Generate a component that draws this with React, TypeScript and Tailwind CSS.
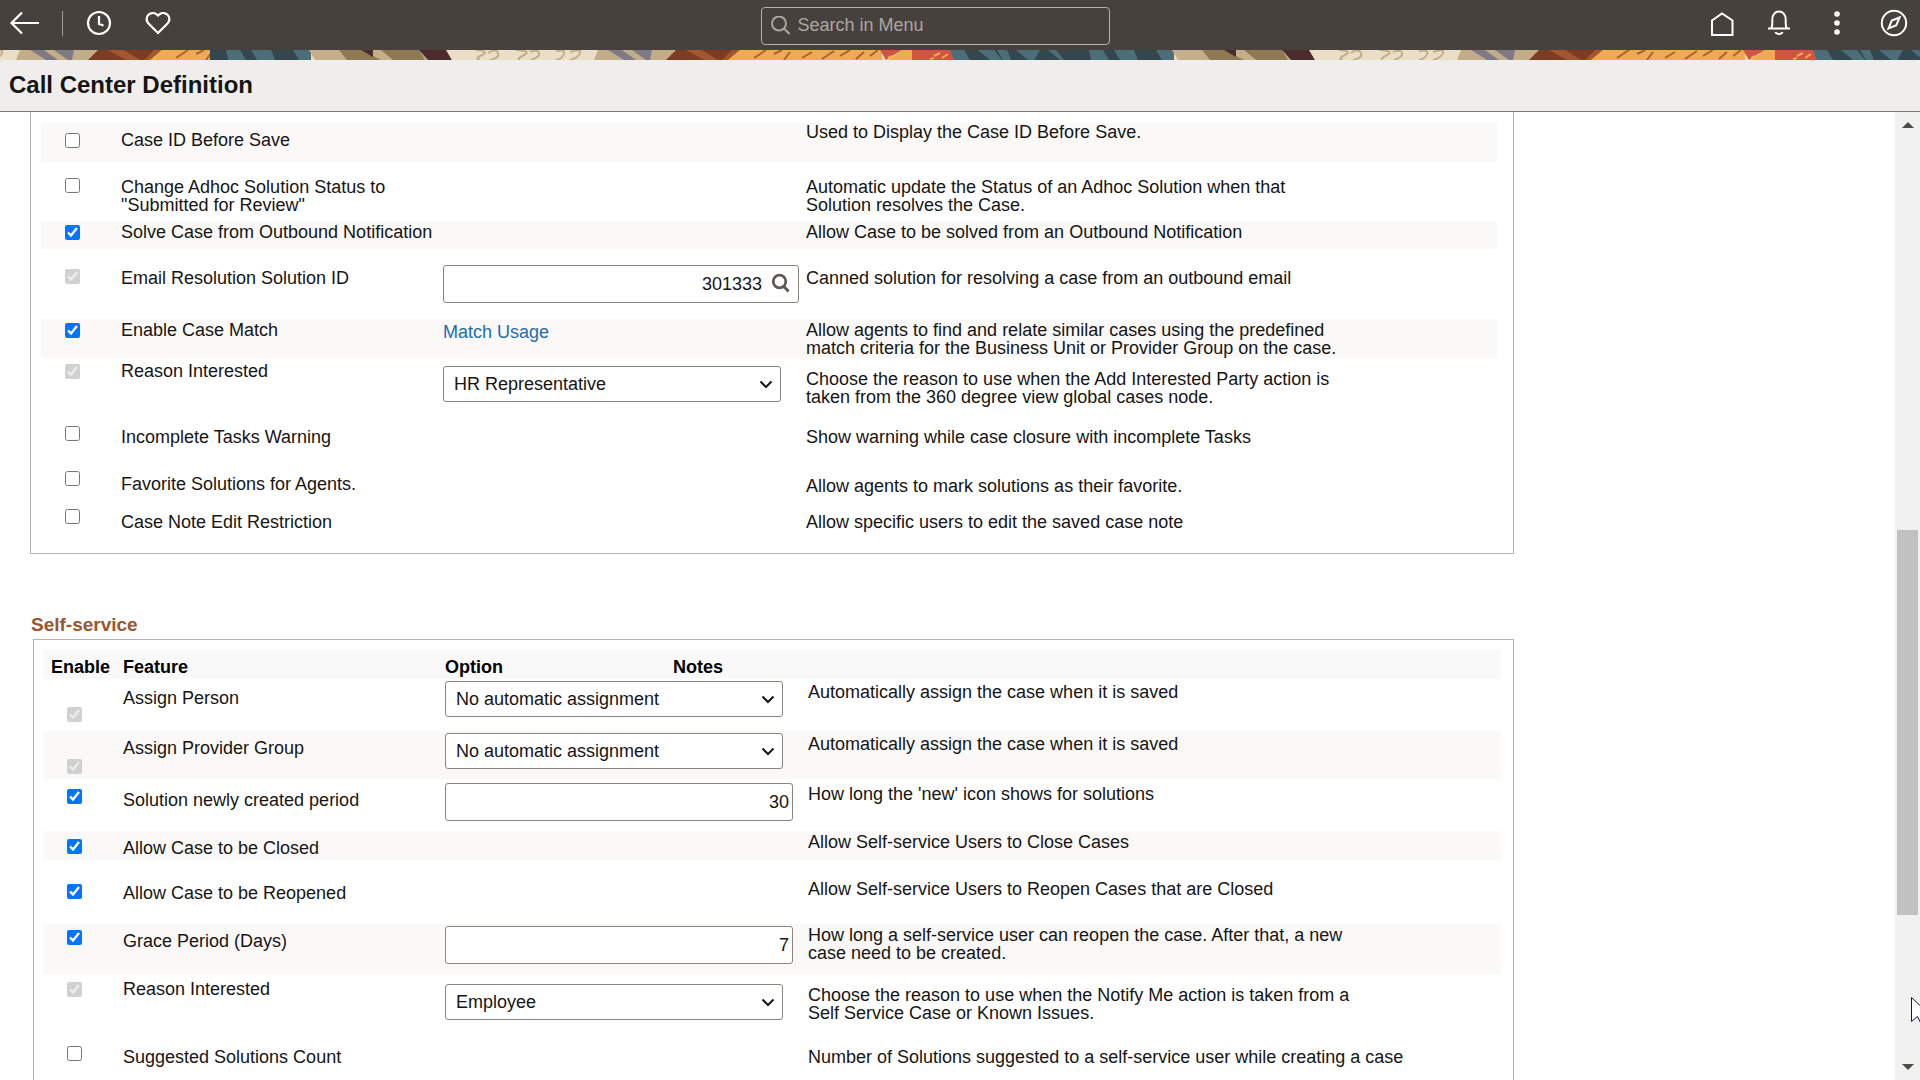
import { useState } from 'react'

type Control =
  | { kind: 'select'; value: string }
  | { kind: 'number'; value: string }
  | { kind: 'lookup'; value: string }
  | { kind: 'link'; value: string }

interface Feature {
  id: string
  label: string
  note: string
  checked?: boolean
  disabled?: boolean
  control?: Control
  row: string
  boxPad: string
  labelPad: string
  controlPad?: string
  notePad: string
}

const CASE_FEATURES: Feature[] = [
  {
    id: 'case-id', label: 'Case ID Before Save', note: 'Used to Display the Case ID Before Save.',
    row: 'h-[39px] bg-[#faf9f8]', boxPad: 'pt-2.5', labelPad: 'pt-2', notePad: 'pt-0',
  },
  {
    id: 'adhoc', label: 'Change Adhoc Solution Status to\n"Submitted for Review"',
    note: 'Automatic update the Status of an Adhoc Solution when that\nSolution resolves the Case.',
    row: 'h-[59px]', boxPad: 'pt-4', labelPad: 'pt-4', notePad: 'pt-4',
  },
  {
    id: 'solve', label: 'Solve Case from Outbound Notification', note: 'Allow Case to be solved from an Outbound Notification',
    checked: true, row: 'h-[28px] bg-[#faf9f8]', boxPad: 'pt-1', labelPad: 'pt-0.5', notePad: 'pt-0.5',
  },
  {
    id: 'email', label: 'Email Resolution Solution ID', note: 'Canned solution for resolving a case from an outbound email',
    checked: true, disabled: true, control: { kind: 'lookup', value: '301333' },
    row: 'h-[70px]', boxPad: 'pt-5', labelPad: 'pt-5', controlPad: 'pt-4', notePad: 'pt-5',
  },
  {
    id: 'match', label: 'Enable Case Match',
    note: 'Allow agents to find and relate similar cases using the predefined\nmatch criteria for the Business Unit or Provider Group on the case.',
    checked: true, control: { kind: 'link', value: 'Match Usage' },
    row: 'h-[39px] bg-[#faf9f8]', boxPad: 'pt-1', labelPad: 'pt-0.5', controlPad: 'pt-1', notePad: 'pt-0.5',
  },
  {
    id: 'reason', label: 'Reason Interested',
    note: 'Choose the reason to use when the Add Interested Party action is\ntaken from the 360 degree view global cases node.',
    checked: true, disabled: true, control: { kind: 'select', value: 'HR Representative' },
    row: 'h-[62px]', boxPad: 'pt-1.5', labelPad: 'pt-1', controlPad: 'pt-2', notePad: 'pt-3',
  },
  {
    id: 'incomplete', label: 'Incomplete Tasks Warning', note: 'Show warning while case closure with incomplete Tasks',
    row: 'h-[45px]', boxPad: 'pt-1.5', labelPad: 'pt-2', notePad: 'pt-2',
  },
  {
    id: 'favorite', label: 'Favorite Solutions for Agents.', note: 'Allow agents to mark solutions as their favorite.',
    row: 'h-[40px]', boxPad: 'pt-1.5', labelPad: 'pt-2.5', notePad: 'pt-3',
  },
  {
    id: 'note-edit', label: 'Case Note Edit Restriction', note: 'Allow specific users to edit the saved case note',
    row: 'h-[36px]', boxPad: 'pt-1', labelPad: 'pt-2', notePad: 'pt-2',
  },
]

const SELF_SERVICE_FEATURES: Feature[] = [
  {
    id: 'assign-person', label: 'Assign Person', note: 'Automatically assign the case when it is saved',
    checked: true, disabled: true, control: { kind: 'select', value: 'No automatic assignment' },
    row: 'h-[52px]', boxPad: 'pt-7', labelPad: 'pt-2.5', controlPad: 'pt-0.5', notePad: 'pt-1',
  },
  {
    id: 'assign-group', label: 'Assign Provider Group', note: 'Automatically assign the case when it is saved',
    checked: true, disabled: true, control: { kind: 'select', value: 'No automatic assignment' },
    row: 'h-[48px] bg-[#faf9f8]', boxPad: 'pt-7', labelPad: 'pt-2', controlPad: 'pt-0.5', notePad: 'pt-1',
  },
  {
    id: 'new-period', label: 'Solution newly created period', note: "How long the 'new' icon shows for solutions",
    checked: true, control: { kind: 'number', value: '30' },
    row: 'h-[52px]', boxPad: 'pt-2.5', labelPad: 'pt-3', controlPad: 'pt-1', notePad: 'pt-1.5',
  },
  {
    id: 'closed', label: 'Allow Case to be Closed', note: 'Allow Self-service Users to Close Cases',
    checked: true, row: 'h-[29px] bg-[#faf9f8]', boxPad: 'pt-2', labelPad: 'pt-2', notePad: 'pt-0.5',
  },
  {
    id: 'reopened', label: 'Allow Case to be Reopened', note: 'Allow Self-service Users to Reopen Cases that are Closed',
    checked: true, row: 'h-[64px]', boxPad: 'pt-6', labelPad: 'pt-6', notePad: 'pt-5',
  },
  {
    id: 'grace', label: 'Grace Period (Days)',
    note: 'How long a self-service user can reopen the case. After that, a new\ncase need to be created.',
    checked: true, control: { kind: 'number', value: '7' },
    row: 'h-[50px] bg-[#faf9f8]', boxPad: 'pt-1.5', labelPad: 'pt-2', controlPad: 'pt-0.5', notePad: 'pt-0.5',
  },
  {
    id: 'ss-reason', label: 'Reason Interested',
    note: 'Choose the reason to use when the Notify Me action is taken from a\nSelf Service Case or Known Issues.',
    checked: true, disabled: true, control: { kind: 'select', value: 'Employee' },
    row: 'h-[62px]', boxPad: 'pt-2', labelPad: 'pt-1.5', controlPad: 'pt-2.5', notePad: 'pt-3',
  },
  {
    id: 'suggested', label: 'Suggested Solutions Count', note: 'Number of Solutions suggested to a self-service user while creating a case',
    row: 'h-[64px]', boxPad: 'pt-2.5', labelPad: 'pt-3', notePad: 'pt-3',
  },
]

function OptionControl({ control, label }: { control: Control; label: string }) {
  if (control.kind === 'link') {
    return <a href="#match-usage" className="block text-[#1f6cab]">{control.value}</a>
  }
  if (control.kind === 'select') {
    return (
      <div className="relative w-[338px]">
        <select
          aria-label={label}
          defaultValue={control.value}
          className="block h-9 w-full appearance-none rounded-[3px] border border-[#8b8580] bg-white pl-2.5 pr-8 leading-6"
        >
          <option>{control.value}</option>
        </select>
        <svg className="pointer-events-none absolute right-2 top-3 h-3 w-3.5" viewBox="0 0 14 12" fill="none" stroke="#161513" strokeWidth="2">
          <path d="M1.5 3.5 7 9l5.5-5.5" />
        </svg>
      </div>
    )
  }
  if (control.kind === 'lookup') {
    return (
      <div className="relative w-[356px]">
        <input
          aria-label={label}
          defaultValue={control.value}
          className="block h-[38px] w-full rounded-[3px] border border-[#8b8580] bg-white pr-9 text-right"
        />
        <button aria-label="Look up solution" className="absolute right-2 top-2">
          <svg className="size-5" viewBox="0 0 20 20" fill="none" stroke="#5f5a56" strokeWidth="2.8">
            <circle cx="8.5" cy="8.5" r="6.3" />
            <path d="m13 13.5 4.500 5" />
          </svg>
        </button>
      </div>
    )
  }
  return (
    <input
      aria-label={label}
      defaultValue={control.value}
      className="block h-[38px] w-[348px] rounded-[3px] border border-[#8b8580] bg-white pr-[3px] text-right"
    />
  )
}

function FeatureTable({ features, withHeader }: { features: Feature[]; withHeader?: boolean }) {
  const [enabled, setEnabled] = useState<Record<string, boolean>>(
    Object.fromEntries(features.map((f) => [f.id, !!f.checked])),
  )

  return (
    <table className="w-full table-fixed border-collapse text-left">
      <colgroup>
        <col className="w-[80px]" />
        <col className="w-[322px]" />
        <col className="w-[228px]" />
        <col className="w-[135px]" />
        <col />
      </colgroup>
      {withHeader && (
        <thead>
          <tr className="h-[29px] bg-[#f9f9f9] align-top text-black">
            <th className="pl-2 pt-2">Enable</th>
            <th className="pt-2">Feature</th>
            <th className="pt-2">Option</th>
            <th className="pt-2" colSpan={2}>Notes</th>
          </tr>
        </thead>
      )}
      <tbody>
        {features.map((f) => (
          <tr key={f.id} className={`align-top ${f.row}`}>
            <td className={`pl-6 ${f.boxPad}`}>
              <input
                id={f.id}
                type="checkbox"
                className="block size-[15px]"
                checked={enabled[f.id]}
                disabled={f.disabled}
                onChange={(e) => setEnabled({ ...enabled, [f.id]: e.target.checked })}
              />
            </td>
            <td className={f.labelPad}>
              <label htmlFor={f.id} className="block whitespace-pre-line">{f.label}</label>
            </td>
            <td colSpan={2} className={f.controlPad}>
              {f.control && <OptionControl control={f.control} label={f.label} />}
            </td>
            <td className={`whitespace-pre-line ${f.notePad}`}>{f.note}</td>
          </tr>
        ))}
      </tbody>
    </table>
  )
}

// One repeat of the banner artwork, 863 x 10
function BannerTile() {
  return (
    <g>
      <rect width="147" height="10" fill="#eadfc6" />
      <g fill="none" stroke="#c3ac88" strokeWidth="2">
        <path d="M24 0q14 1 6 5t-2 5M36 3q8-5 10 0t-8 7M64 0q16 1 8 5t-4 5M78 2q8-3 9 1t-8 7M104 1q10-2 8 3t-8 6M118 2q12-4 10 1t-10 7" />
      </g>
      <path d="M146 0h78l-8 10h-74z" fill="#c3ac88" />
      <path d="M156 0h14l14 10h-12zM180 0h20l-2 10h-4z" fill="#7d7c86" />
      <path d="M224 0h64l-12 10h-62z" fill="#7d3b21" />
      <path d="M234 0h16l16 10h-14zM280 0h8l-12 10h-6z" fill="#a3562f" />
      <path d="M288 0h142v10H276z" fill="#f0ab4c" />
      <g stroke="#a8642c" strokeWidth="2" fill="none">
        <path d="m302 8 12-8M322 4l8-4M332 10l6-8M350 8l10-6M370 9l12-8M388 6l10-6M404 9l8-7M418 6l8-6" />
      </g>
      <path d="M428 0h22l-10 6-6 4zM460 0h38l4 10h-42z" fill="#d5523f" />
      <path d="M450 0h10v10h-24z" fill="#f0ab4c" />
      <path d="M482 6l6-3M478 9l4-1M490 8l6-4M436 8l4-2" stroke="#f0ab4c" strokeWidth="2" />
      <path d="M498 0h222v10H502z" fill="#34474f" />
      <path d="M498 0h14l6 10h-16zM526 0h16l8 10h-12zM545 0h10l4 10h-8zM564 0h24l-6 10h-6zM596 0h8l8 10h-4zM637 0h14l6 10h-18zM662 0h20l4 10h-18zM704 0h18v10h-12z" fill="#4a6f78" />
      <path d="M720 0h124v10H726z" fill="#c6ae8b" />
      <path d="M750 0h22l20 10h-34zM810 0h20l6 10h-32l-12-10z" fill="#8f7952" />
      <path d="M772 0h12v7z" fill="#4d2b2c" />
      <path d="M830 0h28l5 10h-24z" fill="#4d2b2c" />
      <path d="M857 0h6v10z" fill="#eadfc6" />
    </g>
  )
}

function Banner() {
  return (
    <svg className="block h-2.5 w-full shrink-0 bg-[#eadfc6]" aria-hidden="true">
      <defs>
        <clipPath id="banner-start"><rect width="210" height="10" /></clipPath>
        <clipPath id="banner-rest"><rect x="210" width="4000" height="10" /></clipPath>
      </defs>
      <g clipPath="url(#banner-start)">
        <g transform="translate(-126)"><BannerTile /></g>
      </g>
      <g clipPath="url(#banner-rest)">
        <g transform="translate(-411)"><BannerTile /></g>
        <g transform="translate(452)"><BannerTile /></g>
        <g transform="translate(1315)"><BannerTile /></g>
      </g>
    </svg>
  )
}

function TopBar() {
  return (
    <header className="flex h-[50px] shrink-0 items-start bg-[#46413c] pt-[7px] text-white">
      <div className="flex flex-1 items-center pl-2">
        <button aria-label="Back">
          <svg className="size-8" viewBox="0 0 32 32" fill="none" stroke="currentColor" strokeWidth="2.2">
            <path d="M31 16H3M14 5.500 3.500 16 14 26.500" />
          </svg>
        </button>
        <span className="ml-[22px] h-[25px] w-px bg-[#a39e99]" />
        <button aria-label="Recently visited" className="ml-5">
          <svg className="size-8" viewBox="0 0 32 32" fill="none" stroke="currentColor" strokeWidth="2.2">
            <circle cx="16" cy="16" r="11" />
            <path d="M16 9v8l4.500 1.500" />
          </svg>
        </button>
        <button aria-label="Favorites" className="ml-[27px]">
          <svg className="size-8" viewBox="0 0 32 32" fill="none" stroke="currentColor" strokeWidth="2.2">
            <path d="M16 26 6.500 16.500C4.500 14.300 4.200 11 5.800 8.500 7.500 5.800 11.800 5.200 14.300 7.200L16 8.600l1.700-1.400c2.500-2 6.800-1.400 8.500 1.300 1.600 2.500 1.300 5.800-.7 8z" />
          </svg>
        </button>
      </div>
      <label className="mr-12 flex h-[38px] w-[349px] items-center rounded-[4px] border border-[#b5b0ab] pl-2 text-[#aba6a1]">
        <svg className="size-5 shrink-0" viewBox="0 0 20 20" fill="none" stroke="currentColor" strokeWidth="2">
          <circle cx="9" cy="7.500" r="7" />
          <path d="m14 12.500 5.500 5.500" />
        </svg>
        <input
          aria-label="Search in Menu"
          placeholder="Search in Menu"
          className="ml-2 h-full w-full min-w-0 bg-transparent pb-0.5 outline-none placeholder:text-[#aba6a1]"
        />
      </label>
      <div className="flex flex-1 items-center justify-end gap-[25px] pr-2.5">
        <button aria-label="Home">
          <svg className="size-8" viewBox="0 0 32 32" fill="none" stroke="currentColor" strokeWidth="2">
            <path d="M5 28V13.500L15 6.500l10.500 7V28z" />
          </svg>
        </button>
        <button aria-label="Notifications">
          <svg className="size-8" viewBox="0 0 32 32" fill="none" stroke="currentColor" strokeWidth="2">
            <path d="M4 21.500h22M7.500 21c1-2 .8-4.500.8-8.500 0-5 3-8 6.700-8s6.700 3 6.700 8c0 4-.2 6.500.8 8.500M11.500 25c1 2.600 6 2.600 7 0" />
          </svg>
        </button>
        <button aria-label="Actions">
          <svg className="size-8" viewBox="0 0 32 32" fill="currentColor">
            <circle cx="16" cy="7" r="2.8" />
            <circle cx="16" cy="16" r="2.8" />
            <circle cx="16" cy="25" r="2.8" />
          </svg>
        </button>
        <button aria-label="Navigator">
          <svg className="size-8" viewBox="0 0 32 32" fill="none" stroke="currentColor" strokeWidth="2">
            <circle cx="16" cy="16" r="12.200" />
            <path d="M21.500 10.500 13.800 13.500 10.500 21.500 18.300 18.300z" />
          </svg>
        </button>
      </div>
    </header>
  )
}

function ScrollTrack() {
  return (
    <div className="flex w-[25px] shrink-0 flex-col items-center bg-[#f1f1f1] py-2.5" aria-hidden="true">
      <svg className="h-1.5 w-3 shrink-0" viewBox="0 0 12 6" fill="#504c48"><path d="M6 0 12 6H0z" /></svg>
      <div className="grow-[402]" />
      <div className="w-[21px] grow-[386] bg-[#c1c1c1]" />
      <div className="grow-[149]" />
      <svg className="h-1.5 w-3 shrink-0" viewBox="0 0 12 6" fill="#504c48"><path d="M0 0h12L6 6z" /></svg>
    </div>
  )
}

export default function App() {
  return (
    <div className="relative flex h-screen flex-col overflow-hidden bg-white font-['Liberation_Sans',Arial,sans-serif] text-[18px] leading-[18px] text-[#161513]">
      <TopBar />
      <Banner />
      <div className="flex h-[52px] shrink-0 items-center border-b border-[#7d7a77] bg-[#f0eeed] pb-0.5 pl-[9px]">
        <h1 className="text-[24px] leading-6 font-bold">Call Center Definition</h1>
      </div>
      <div className="flex min-h-0 flex-1">
        <main className="min-w-0 flex-1 overflow-hidden pl-[30px]">
          <div className="max-w-[1484px]">
            <section className="border-x border-b border-[#b5b3b0] pt-[11px] pr-4 pb-3 pl-2.5">
              <FeatureTable features={CASE_FEATURES} />
            </section>
            <h2 className="mt-[61px] mb-1 pl-px text-[19px] leading-5 font-bold text-[#9a562f]">Self-service</h2>
            <section className="ml-[3px] border border-[#b5b3b0] pt-2.5 pr-3 pb-3 pl-[9px]">
              <FeatureTable features={SELF_SERVICE_FEATURES} withHeader />
            </section>
          </div>
        </main>
        <ScrollTrack />
      </div>
      {/* mouse pointer resting on the right edge */}
      <svg className="pointer-events-none absolute right-0 bottom-[55px] h-7 w-[9px]" viewBox="0 0 9 28" fill="#fff" stroke="#1a1830">
        <path d="M.5.5v24l6-5 4 8 4-2-4-8h8z" />
      </svg>
    </div>
  )
}
